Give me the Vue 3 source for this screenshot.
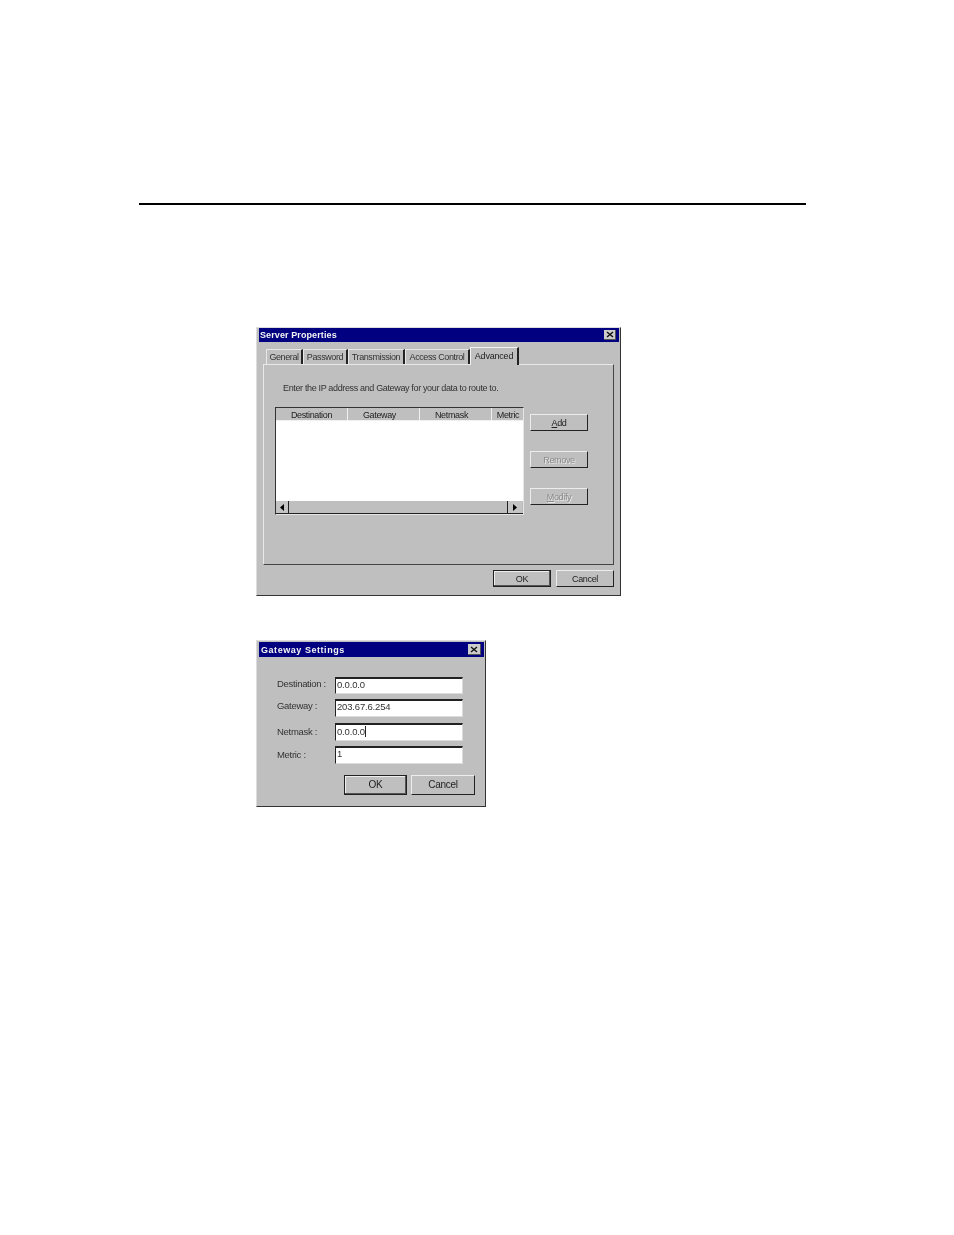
<script setup>
const tabs = [
  { label: 'General', width: 37 },
  { label: 'Password', width: 45 },
  { label: 'Transmission', width: 57 },
  { label: 'Access Control', width: 65 },
]
const columns = [
  { label: 'Destination', width: 72 },
  { label: 'Gateway', width: 72 },
  { label: 'Netmask', width: 72 },
  { label: 'Metric', width: 32 },
]
const fields = [
  { label: 'Destination :', value: '0.0.0.0' },
  { label: 'Gateway :', value: '203.67.6.254' },
  { label: 'Netmask :', value: '0.0.0.0', caret: true },
  { label: 'Metric :', value: '1' },
]
</script>

<template>
  <main class="page">
    <div class="rule"></div>

    <section class="window server">
      <header class="title">
        <span>Server Properties</span>
        <span class="close">
          <svg viewBox="0 0 8 7" width="8" height="7"><path d="M1 1l6 5M7 1L1 6" stroke="#111" stroke-width="1.400" fill="none" /></svg>
        </span>
      </header>

      <div class="tabs">
        <div v-for="t in tabs" :key="t.label" class="tab" :style="{ width: t.width + 'px' }">{{ t.label }}</div>
        <div class="tab active">Advanced</div>
      </div>

      <div class="panel">
        <p class="hint">Enter the IP address and Gateway for your data to route to.</p>
        <div class="panel-body">
          <div class="list">
            <div class="list-head">
              <div v-for="c in columns" :key="c.label" class="col" :style="{ width: c.width + 'px' }">{{ c.label }}</div>
            </div>
            <div class="list-rows"></div>
            <div class="scrollbar">
              <span class="arrow">
                <svg viewBox="0 0 4 7" width="4" height="7"><path d="M4 0v7L0 3.500z" fill="#000" /></svg>
              </span>
              <span class="track"></span>
              <span class="arrow">
                <svg viewBox="0 0 4 7" width="4" height="7"><path d="M0 0v7l4-3.500z" fill="#000" /></svg>
              </span>
            </div>
          </div>
          <div class="side-buttons">
            <button class="btn side"><span class="u">A</span>dd</button>
            <button class="btn side disabled">Remove</button>
            <button class="btn side disabled"><span class="u">M</span>odify</button>
          </div>
        </div>
      </div>

      <footer class="server-foot">
        <button class="btn foot default">OK</button>
        <button class="btn foot">Cancel</button>
      </footer>
    </section>

    <section class="window gateway">
      <header class="title wide">
        <span>Gateway Settings</span>
        <span class="close big">
          <svg viewBox="0 0 8 7" width="8" height="7"><path d="M1 1l6 5M7 1L1 6" stroke="#111" stroke-width="1.400" fill="none" /></svg>
        </span>
      </header>

      <div class="form">
        <div v-for="f in fields" :key="f.label" class="field">
          <label class="field-label">{{ f.label }}</label>
          <div class="input">{{ f.value }}<i v-if="f.caret" class="caret"></i></div>
        </div>
      </div>

      <footer class="gateway-foot">
        <button class="btn big default ok">OK</button>
        <button class="btn big">Cancel</button>
      </footer>
    </section>
  </main>
</template>

<style scoped>
.page {
  box-sizing: border-box;
  width: 954px;
  min-height: 1235px;
  padding-top: 203px;
  background: #fff;
  font-family: "Liberation Sans", Arial, sans-serif;
  font-size: 9px;
  letter-spacing: -0.35px;
  color: #222;
}
.rule {
  width: 667px;
  height: 2px;
  margin-left: 139px;
  background: #000;
}
.window {
  box-sizing: border-box;
  margin-left: 256px;
  background: #bfbfbf;
  border: 1px solid;
  border-color: #dcdcdc #333 #333 #dcdcdc;
  padding: 0 1px 0 2px;
  filter: blur(0.35px);
}
.server {
  width: 365px;
  height: 269px;
  margin-top: 122px;
}
.gateway {
  width: 230px;
  height: 167px;
  margin-top: 44px;
  padding-top: 1px;
}
.title {
  display: flex;
  align-items: center;
  justify-content: space-between;
  height: 14px;
  padding: 0 3px 0 1px;
  background: #000080;
  color: #f4f4f4;
  font-weight: 700;
  font-size: 9px;
  letter-spacing: 0.1px;
}
.title.wide {
  height: 15px;
  padding-left: 2px;
  letter-spacing: 0.55px;
}
.close {
  display: flex;
  align-items: center;
  justify-content: center;
  width: 11px;
  height: 9px;
  background: #cccccc;
  border-right: 1px solid #555;
  border-bottom: 1px solid #555;
}
.close.big {
  width: 12px;
  height: 10px;
}
.tabs {
  display: flex;
  align-items: flex-end;
  height: 22px;
  margin-left: 7px;
  position: relative;
  z-index: 1;
}
.tab {
  box-sizing: border-box;
  height: 15px;
  line-height: 15px;
  text-align: center;
  color: #333;
  font-size: 9px;
  letter-spacing: -0.4px;
  white-space: nowrap;
  border-top: 1px solid #e8e8e8;
  border-left: 1px solid #e8e8e8;
  border-right: 2px solid #222;
}
.tab.active {
  width: 49px;
  height: 18px;
  line-height: 17px;
  margin-bottom: -1px;
  background: #bfbfbf;
  border-top-color: #f2f2f2;
  border-left-color: #f2f2f2;
  color: #222;
  letter-spacing: -0.2px;
}
.panel {
  box-sizing: border-box;
  width: 351px;
  height: 201px;
  margin-left: 4px;
  border: 1px solid;
  border-color: #e8e8e8 #444 #444 #e8e8e8;
}
.hint {
  margin: 17px 0 0 19px;
  line-height: 12px;
  color: #333;
}
.panel-body {
  display: flex;
  align-items: flex-start;
  margin: 13px 0 0 11px;
}
.list {
  box-sizing: border-box;
  width: 249px;
  height: 108px;
  display: flex;
  flex-direction: column;
  background: #fff;
  border: 1px solid;
  border-color: #333 #e6e6e6 #e6e6e6 #333;
}
.list-head {
  display: flex;
  height: 13px;
  overflow: hidden;
  background: #bfbfbf;
}
.col {
  box-sizing: border-box;
  flex: none;
  line-height: 14px;
  text-align: center;
  white-space: nowrap;
  border-right: 1px solid #f0f0f0;
  border-bottom: 1px solid #f0f0f0;
}
.col:nth-child(2),
.col:nth-child(3) {
  padding-right: 8px;
}
.col:last-child {
  border-right: 0;
}
.list-rows {
  flex: 1;
}
.scrollbar {
  display: flex;
  height: 12px;
  background: #bfbfbf;
  border-bottom: 1px solid #222;
}
.arrow {
  display: flex;
  align-items: center;
  justify-content: center;
  width: 12px;
  background: #c4c4c4;
  border-right: 1px solid #222;
}
.arrow:last-child {
  width: 14px;
  border-left: 1px solid #222;
  border-right: 1px solid #bbb;
}
.track {
  flex: 1;
}
.side-buttons {
  display: flex;
  flex-direction: column;
  gap: 20px;
  margin: 7px 0 0 6px;
}
.btn {
  box-sizing: border-box;
  display: block;
  padding: 0;
  background: #bfbfbf;
  border: 1px solid;
  border-color: #ececec #222 #222 #ececec;
  font: inherit;
  letter-spacing: inherit;
  color: #222;
  text-align: center;
}
.btn.side {
  width: 58px;
  height: 17px;
}
.btn.disabled {
  color: #8c8c8c;
  text-shadow: 1px 1px 0 #e8e8e8;
}
.u {
  text-decoration: underline;
}
.btn.default {
  border-color: #222;
  box-shadow: inset -1px -1px 0 #555, inset 1px 1px 0 #eee;
}
.server-foot {
  display: flex;
  justify-content: flex-end;
  gap: 5px;
  margin: 5px 5px 0 0;
}
.btn.foot {
  width: 58px;
  height: 17px;
}
.form {
  display: flex;
  flex-direction: column;
  gap: 5px;
  margin: 20px 0 0 18px;
}
.field {
  display: flex;
  align-items: flex-start;
}
.field:nth-child(3) {
  margin-top: 1px;
}
.field-label {
  width: 58px;
  line-height: 18px;
  color: #333;
  font-size: 9.500px;
  letter-spacing: -0.3px;
}
.field:nth-child(-n + 2) .field-label {
  line-height: 14px;
}
.input {
  box-sizing: border-box;
  width: 128px;
  height: 18px;
  padding-left: 1px;
  line-height: 14px;
  background: #fff;
  border: 1px solid;
  border-color: #222 #dcdcdc #dcdcdc #222;
  border-top-width: 2px;
  color: #333;
  font-size: 9.500px;
  letter-spacing: -0.17px;
}
.field:nth-child(1) .input {
  height: 17px;
  line-height: 11px;
}
.field:nth-child(2) .input,
.field:nth-child(4) .input {
  line-height: 12px;
}
.caret {
  display: inline-block;
  width: 1px;
  height: 11px;
  vertical-align: -2px;
  background: #222;
}
.gateway-foot {
  display: flex;
  justify-content: flex-end;
  gap: 4px;
  margin: 11px 9px 0 0;
}
.btn.big {
  width: 64px;
  height: 20px;
  padding-bottom: 1px;
  font-size: 10px;
  letter-spacing: -0.3px;
}
.btn.big.ok {
  width: 63px;
}
</style>

<style>
html, body {
  margin: 0;
  background: #fff;
}
</style>
